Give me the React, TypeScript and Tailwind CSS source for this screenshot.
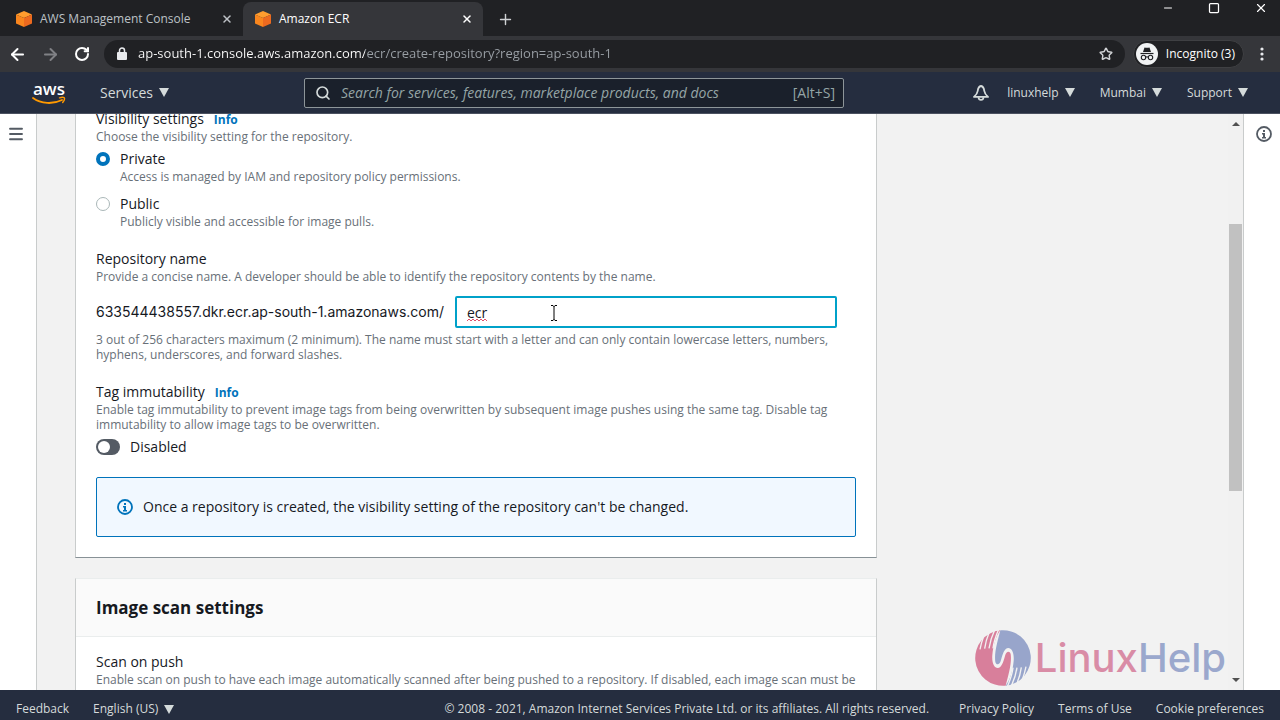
import { useState } from 'react'
import type { ReactNode } from 'react'
import { ArrowLeft, ArrowRight, Menu, Minus, Plus, RotateCw, Search, Square, Star, X } from 'lucide-react'

function CubeIcon() {
    return (
        <svg width="16" height="18" viewBox="0 0 16 18" className="shrink-0">
            <path d="M8 1 16 4.5 8 8 0 4.5Z" fill="#ff9d2e" />
            <path d="M0 4.5 8 8v9L0 13.5Z" fill="#f9861e" />
            <path d="M16 4.5 8 8v9l8-3.5Z" fill="#ed6a1f" />
        </svg>
    )
}

function Caret() {
    return (
        <svg width="10" height="9" viewBox="0 0 10 9" className="shrink-0">
            <path d="M0 0h10L5 9Z" fill="#d5dbdb" />
        </svg>
    )
}

function InfoIcon({ className }: { className: string }) {
    return (
        <svg width="16" height="16" viewBox="0 0 16 16" className={className}>
            <circle cx="8" cy="8" r="7" fill="none" stroke="currentColor" strokeWidth="1.8" />
            <path d="M7 4h2v2H7ZM6 7h3v4h1v1.4H6V11h1V8.4H6Z" fill="currentColor" />
        </svg>
    )
}

function IncognitoIcon() {
    return (
        <svg width="22" height="22" viewBox="0 0 22 22" className="shrink-0">
            <circle cx="11" cy="11" r="11" fill="#f1f3f4" />
            <path d="M8.500 4.500q2.500.6 5 0l1.500 4.500H7Z" fill="#202124" />
            <path d="M4.500 10.500h13" stroke="#202124" strokeWidth="1.2" />
            <g fill="none" stroke="#202124" strokeWidth="1.1">
                <circle cx="7.5" cy="14.5" r="2.2" />
                <circle cx="14.5" cy="14.5" r="2.2" />
                <path d="M9.700 14.200q1.300-.8 2.600 0" />
            </g>
        </svg>
    )
}

function BellIcon() {
    return (
        <svg width="16" height="18" viewBox="0 0 16 18" fill="none" stroke="#d5dbdb" strokeWidth="1.8" strokeLinejoin="round">
            <path d="M8 2C6 2.400 5 4.500 4.700 7 4.400 9.500 3 11 1 12.900h14C13 11 11.600 9.500 11.300 7 11 4.500 10 2.400 8 2Z" />
            <path d="M5.500 13.200c.3 3.600 4.700 3.600 5 0" />
        </svg>
    )
}

function AwsLogo() {
    return (
        <svg width="34" height="30" viewBox="0 0 34 30">
            <text x="17" y="17" textAnchor="middle" fontSize="17" fontWeight="600" fill="#fff" fontFamily="'Open Sans', sans-serif">
                aws
            </text>
            <path d="M1 20c8 6 20 6.500 29 2" fill="none" stroke="#f90" strokeWidth="1.8" strokeLinecap="round" />
            <path d="M27.500 19.800c2-.6 4-.7 4.800 0 .5.900-.3 3.200-1.600 4.700" fill="none" stroke="#f90" strokeWidth="1.4" strokeLinecap="round" />
        </svg>
    )
}

function Hand({ fill }: { fill: string }) {
    return (
        <>
            <path
                d="M76 1C62 20 55 45 52 75c-2 25 6 39 16 39 12-1 16-16 22-36 4-16 14-16 17-6 4 28-7 63-15 95A83 83 0 0 1 76 1Z"
                fill={fill}
            />
            <path d="M15 58Q19 38 27 16M29 56Q32 32 43 6M42 55Q46 28 59 0M54 55Q57 30 71-2" stroke="#f2f2f2" strokeWidth="4" fill="none" />
        </>
    )
}

function Watermark() {
    return (
        <div className="pointer-events-none absolute right-0.5 bottom-1 flex items-center gap-1">
            <svg width="56" height="56" viewBox="0 0 168 168">
                <Hand fill="#d87f9b" />
                <g transform="rotate(180 84 84)">
                    <Hand fill="#98a5cb" />
                </g>
            </svg>
            <span className="font-['Inter',sans-serif] text-[40px] leading-12 font-medium text-[#d98ca6]">
                Linux<span className="text-[#9ba8cd]">Help</span>
            </span>
        </div>
    )
}

function Tab({ title, active }: { title: string; active?: boolean }) {
    return (
        <div
            className={
                active
                    ? 'flex w-60 items-center gap-2 rounded-t-lg bg-[#35363a] pr-2.5 pl-3 text-white'
                    : 'flex w-[243px] items-center gap-2 pr-2.5 pl-4 text-[#bdc1c6]'
            }
        >
            <CubeIcon />
            <button className="flex-1 text-left">{title}</button>
            <button aria-label={`Close ${title}`}>
                <X size={12} strokeWidth={3} />
            </button>
        </div>
    )
}

function BrowserChrome() {
    return (
        <header className="shrink-0 bg-[#202124] text-xs">
            <div className="flex h-9 justify-between">
                <div className="flex pt-0.5">
                    <Tab title="AWS Management Console" />
                    <Tab title="Amazon ECR" active />
                    <button aria-label="New tab" className="ml-3.5 text-[#d0d2d5]">
                        <Plus size={17} />
                    </button>
                </div>
                <div className="flex h-4 items-center gap-[34px] pr-3 text-white">
                    <button aria-label="Minimize">
                        <Minus size={12} />
                    </button>
                    <button aria-label="Maximize">
                        <Square size={12} strokeWidth={2.5} />
                    </button>
                    <button aria-label="Close window">
                        <X size={14} />
                    </button>
                </div>
            </div>
            <div className="flex h-9 items-center bg-[#35363a] pr-4 pl-2 text-white">
                <div className="flex gap-3.5">
                    <button aria-label="Back">
                        <ArrowLeft size={19} strokeWidth={2.5} />
                    </button>
                    <button aria-label="Forward" className="text-[#808185]">
                        <ArrowRight size={19} strokeWidth={2.5} />
                    </button>
                    <button aria-label="Reload">
                        <RotateCw size={16} strokeWidth={3} />
                    </button>
                </div>
                <div className="ml-3.5 flex h-7 flex-1 items-center rounded-full bg-[#202124] pr-3 pl-3">
                    <svg width="12" height="14" viewBox="0 0 12 14" className="shrink-0">
                        <path d="M2 5h8q1 0 1 1v6q0 1-1 1H2q-1 0-1-1V6q0-1 1-1Z" fill="#e8eaed" />
                        <path d="M3.500 5.500V3.500a2.500 2.500 0 0 1 5 0v2" fill="none" stroke="#e8eaed" strokeWidth="1.5" />
                    </svg>
                    <input
                        aria-label="Address"
                        defaultValue="ap-south-1.console.aws.amazon.com/ecr/create-repository?region=ap-south-1"
                        className="ml-2.5 min-w-0 flex-1 bg-[linear-gradient(to_right,#ffffff_227px,#9aa0a6_227px)] bg-clip-text text-[13px] text-transparent outline-none"
                    />
                    <button aria-label="Bookmark">
                        <Star size={14} strokeWidth={2.5} className="text-[#d0d2d5]" />
                    </button>
                </div>
                <button className="ml-2 flex h-7 items-center gap-2 rounded-full border border-[#3f4043] bg-[#202124] pr-2 pl-0.5">
                    <IncognitoIcon />
                    Incognito (3)
                </button>
                <button aria-label="Browser menu" className="ml-4">
                    <svg width="4" height="14" viewBox="0 0 4 14" fill="#e8eaed">
                        <circle cx="2" cy="2" r="1.6" />
                        <circle cx="2" cy="7" r="1.6" />
                        <circle cx="2" cy="12" r="1.6" />
                    </svg>
                </button>
            </div>
        </header>
    )
}

function MenuButton({ children }: { children: ReactNode }) {
    return (
        <button className="flex items-center gap-1.5">
            {children}
            <Caret />
        </button>
    )
}

function ConsoleNav() {
    return (
        <nav className="flex h-[42px] shrink-0 items-center border-b border-[#4b5160] bg-[#252d3f] pr-8 pl-8 text-[#d5dbdb]">
            <a href="#home" aria-label="AWS home">
                <AwsLogo />
            </a>
            <div className="ml-[34px] w-[204px] text-sm">
                <MenuButton>Services</MenuButton>
            </div>
            <label className="flex h-[30px] w-[540px] items-center rounded-xs border border-[#8d9599] bg-[#1a202b] pr-2 pl-2.5 text-sm text-[#95a5a6]">
                <Search size={16} strokeWidth={2.5} className="text-[#d5dbdb]" />
                <input
                    aria-label="Search"
                    placeholder="Search for services, features, marketplace products, and docs"
                    className="ml-2.5 min-w-0 flex-1 italic outline-none placeholder:text-[#95a5a6]"
                />
                [Alt+S]
            </label>
            <div className="ml-auto flex items-center text-xs">
                <button aria-label="Notifications" className="mr-[18px]">
                    <BellIcon />
                </button>
                <div className="flex gap-[25px]">
                    <MenuButton>linuxhelp</MenuButton>
                    <MenuButton>Mumbai</MenuButton>
                    <MenuButton>Support</MenuButton>
                </div>
            </div>
        </nav>
    )
}

function Hint({ id, children }: { id?: string; children: ReactNode }) {
    return (
        <p id={id} className="text-xs leading-[15px] text-[#687078]">
            {children}
        </p>
    )
}

function InfoLink() {
    return (
        <a href="#info" className="ml-2.5 text-xs font-bold text-[#0073bb]">
            Info
        </a>
    )
}

interface VisibilityOptionProps {
    label: string
    hint: string
    checked: boolean
    onSelect: () => void
}

function VisibilityOption({ label, hint, checked, onSelect }: VisibilityOptionProps) {
    return (
        <label className="flex gap-2.5">
            <input
                type="radio"
                name="visibility"
                checked={checked}
                onChange={onSelect}
                className="mt-[3px] h-3.5 w-3.5 shrink-0 appearance-none rounded-full border border-[#aab7b8] bg-white checked:border-4 checked:border-[#0073bb]"
            />
            <span>
                {label}
                <Hint>{hint}</Hint>
            </span>
        </label>
    )
}

function RepositoryForm() {
    const [visibility, setVisibility] = useState('private')
    const [name, setName] = useState('ecr')
    const [immutable, setImmutable] = useState(false)

    return (
        <section className="-mt-[5px] border-x border-b border-x-[#c9cccc] border-b-[#879196] bg-white px-5 pb-5">
            <fieldset>
                <legend>
                    Visibility settings
                    <InfoLink />
                </legend>
                <Hint>Choose the visibility setting for the repository.</Hint>
                <div className="mt-[5px] flex flex-col gap-2.5">
                    <VisibilityOption
                        label="Private"
                        hint="Access is managed by IAM and repository policy permissions."
                        checked={visibility === 'private'}
                        onSelect={() => setVisibility('private')}
                    />
                    <VisibilityOption
                        label="Public"
                        hint="Publicly visible and accessible for image pulls."
                        checked={visibility === 'public'}
                        onSelect={() => setVisibility('public')}
                    />
                </div>
            </fieldset>

            <div className="mt-5">
                <label htmlFor="repo-name">Repository name</label>
                <Hint>Provide a concise name. A developer should be able to identify the repository contents by the name.</Hint>
                <div className="relative mt-3 mb-1 flex items-center gap-[3px] pr-[19px]">
                    <span className="w-[356px] shrink-0 font-['Inter','Open_Sans',sans-serif] whitespace-nowrap">
                        633544438557.dkr.ecr.ap-south-1.amazonaws.com/
                    </span>
                    <input
                        id="repo-name"
                        aria-describedby="repo-name-hint"
                        value={name}
                        onChange={(e) => setName(e.target.value)}
                        className="h-8 min-w-0 flex-1 rounded-xs border-2 border-[#00a1c9] px-2.5 outline-none"
                    />
                    {/* spelling mark and text cursor */}
                    <svg width="20" height="4" viewBox="0 0 20 4" className="absolute top-[22px] left-[371px]">
                        <path d="M0 3 2 1l2 2 2-2 2 2 2-2 2 2 2-2 2 2 2-2 2 2" fill="none" stroke="#e0506a" />
                    </svg>
                    <svg width="8" height="16" viewBox="0 0 8 16" className="absolute top-[9px] left-[454px]">
                        <path d="M1 .5h2l1 1 1-1h2M4 1v14M1 15.500h2l1-1 1 1h2" fill="none" stroke="#000" />
                    </svg>
                </div>
                <Hint id="repo-name-hint">
                    3 out of 256 characters maximum (2 minimum). The name must start with a letter and can only contain lowercase letters, numbers,
                    hyphens, underscores, and forward slashes.
                </Hint>
            </div>

            <div className="mt-5">
                <h3>
                    Tag immutability
                    <InfoLink />
                </h3>
                <Hint>
                    Enable tag immutability to prevent image tags from being overwritten by subsequent image pushes using the same tag. Disable tag
                    immutability to allow image tags to be overwritten.
                </Hint>
                <label className="mt-[5px] flex items-center gap-2.5">
                    <input
                        type="checkbox"
                        role="switch"
                        checked={immutable}
                        onChange={(e) => setImmutable(e.target.checked)}
                        className="flex h-4 w-6 appearance-none items-center rounded-full bg-[#545b64] px-0.5 before:h-3 before:w-3 before:rounded-full before:bg-white checked:justify-end checked:bg-[#0073bb]"
                    />
                    {immutable ? 'Enabled' : 'Disabled'}
                </label>
            </div>

            <div className="mt-5 flex items-center gap-2.5 rounded-xs border border-[#0073bb] bg-[#f1f8ff] px-5 py-[19px]">
                <InfoIcon className="shrink-0 text-[#0073bb]" />
                Once a repository is created, the visibility setting of the repository can&apos;t be changed.
            </div>
        </section>
    )
}

function ScanSettings() {
    return (
        <section className="mt-5 border border-x-[#c9cccc] border-t-[#eaeded] bg-white">
            <h2 className="border-b border-[#eaeded] bg-[#fafafa] px-5 py-[18px] text-[17px] leading-[21px] font-bold">Image scan settings</h2>
            <div className="px-5 pt-[15px] pb-5">
                <h3>Scan on push</h3>
                <Hint>
                    Enable scan on push to have each image automatically scanned after being pushed to a repository. If disabled, each image scan must be
                </Hint>
            </div>
        </section>
    )
}

function ScrollBar() {
    return (
        <div className="flex w-[15px] shrink-0 flex-col items-center bg-[#f1f1f1] py-2">
            <svg width="8" height="4" viewBox="0 0 8 4">
                <path d="M0 4 4 0l4 4Z" fill="#505050" />
            </svg>
            <div className="flex-[98]" />
            <div className="w-[13px] flex-[268] bg-[#c1c1c1]" />
            <div className="flex-[187]" />
            <svg width="8" height="4" viewBox="0 0 8 4">
                <path d="m0 0 4 4 4-4Z" fill="#505050" />
            </svg>
        </div>
    )
}

function Footer() {
    return (
        <footer className="flex h-[30px] shrink-0 items-center bg-[#252d3f] pt-2 pr-4 pl-4 text-xs text-[#d5dbdb]">
            <button>Feedback</button>
            <div className="ml-6">
                <MenuButton>English (US)</MenuButton>
            </div>
            <span className="ml-auto">© 2008 - 2021, Amazon Internet Services Private Ltd. or its affiliates. All rights reserved.</span>
            <div className="ml-[30px] flex gap-6">
                <a href="#privacy">Privacy Policy</a>
                <a href="#terms">Terms of Use</a>
                <a href="#cookies">Cookie preferences</a>
            </div>
        </footer>
    )
}

export default function App() {
    return (
        <div className="flex h-screen flex-col overflow-hidden font-['Open_Sans','Noto_Sans',sans-serif] text-sm leading-5 text-[#16191f]">
            <BrowserChrome />
            <ConsoleNav />
            <div className="flex min-h-0 flex-1">
                <aside className="w-[37px] shrink-0 border-r border-[#c9cccc] bg-white pt-[11px] pl-[7px]">
                    <button aria-label="Open navigation" className="text-[#545b64]">
                        <Menu size={18} strokeWidth={2.5} />
                    </button>
                </aside>
                <main className="relative min-w-0 flex-1 overflow-hidden bg-[#f2f2f2] pl-[38px]">
                    <div className="max-w-[802px]">
                        <RepositoryForm />
                        <ScanSettings />
                    </div>
                    <Watermark />
                </main>
                <ScrollBar />
                <aside className="w-[37px] shrink-0 border-l border-[#c9cccc] bg-white pt-3 pl-3">
                    <button aria-label="Open help panel">
                        <InfoIcon className="text-[#545b64]" />
                    </button>
                </aside>
            </div>
            <Footer />
        </div>
    )
}
